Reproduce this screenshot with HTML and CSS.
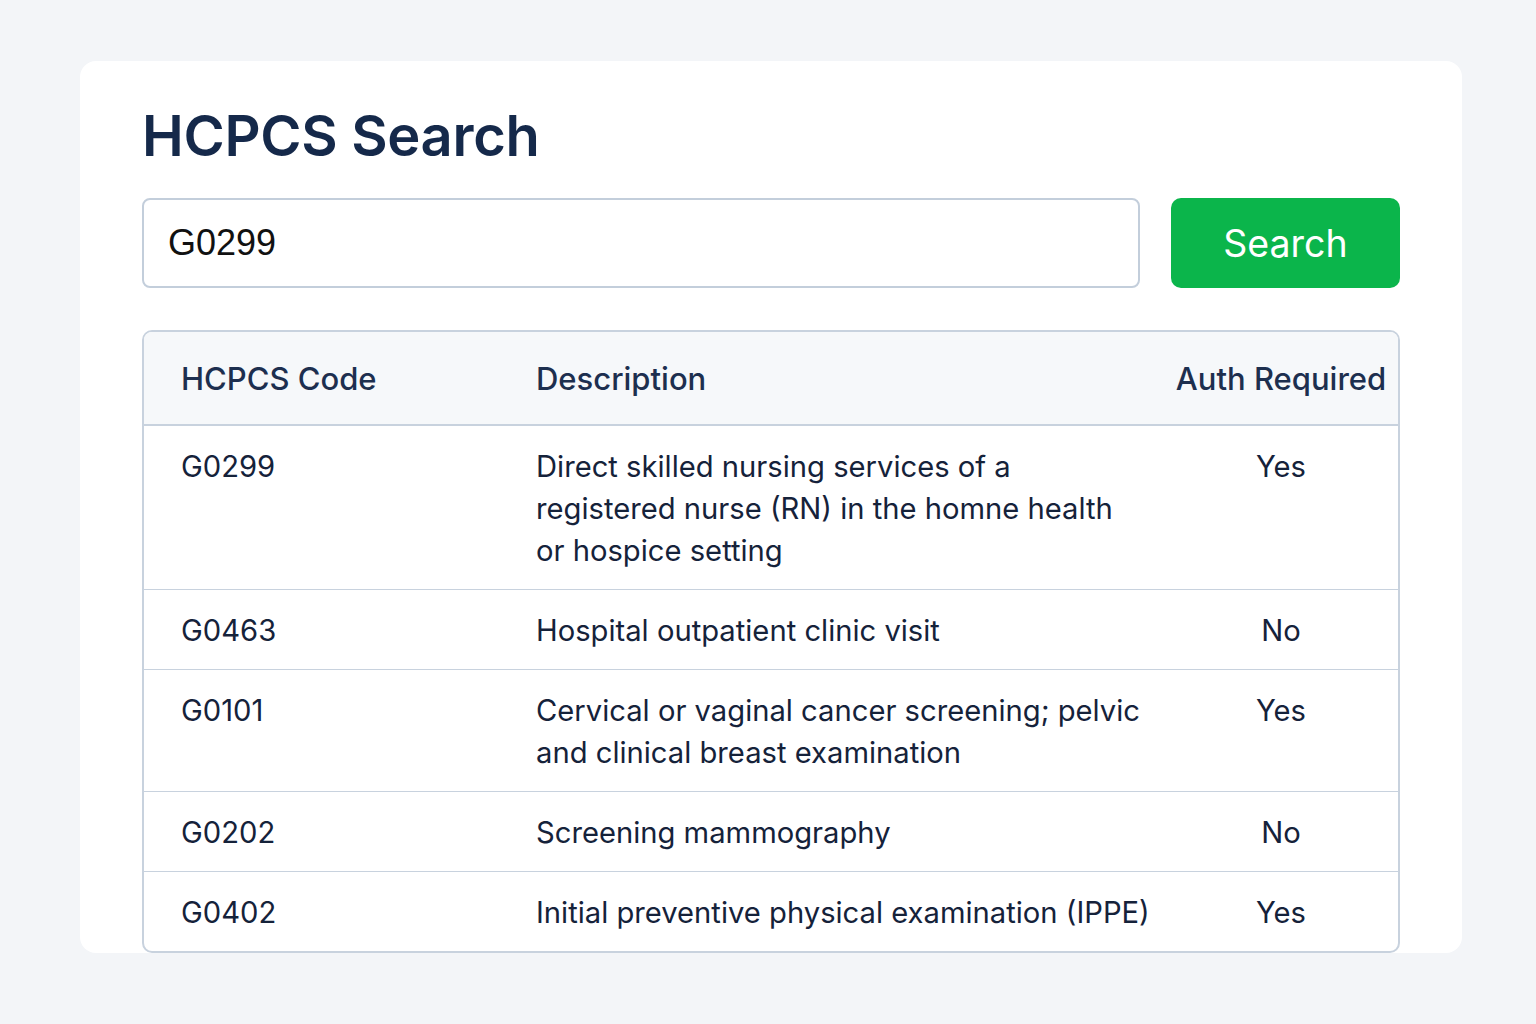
FILE: index.html
```html
<!DOCTYPE html>
<html lang="en">
<head>
  <meta charset="UTF-8">
  <meta name="viewport" content="width=device-width, initial-scale=1.0">
  <title>HCPCS Search</title>
  <link rel="stylesheet" href="styles.css">
</head>
<body>
  <div class="card">
    <h1>HCPCS Search</h1>

    <div class="search-row">
      <input class="search-input" type="text" id="code" value="G0299">
      <button class="search-btn" id="search-btn">Search</button>
    </div>

    <div class="table-wrap">
      <table class="results">
        <thead>
          <tr>
            <th class="col-code">HCPCS Code</th>
            <th class="col-desc">Description</th>
            <th class="col-auth">Auth Required</th>
          </tr>
        </thead>
        <tbody>
          <tr>
            <td>G0299</td>
            <td>Direct skilled nursing services of a<br>registered nurse (RN) in the homne health<br>or hospice setting</td>
            <td class="auth">Yes</td>
          </tr>
          <tr>
            <td>G0463</td>
            <td>Hospital outpatient clinic visit</td>
            <td class="auth">No</td>
          </tr>
          <tr>
            <td>G0101</td>
            <td>Cervical or vaginal cancer screening; pelvic<br>and clinical breast examination</td>
            <td class="auth">Yes</td>
          </tr>
          <tr>
            <td>G0202</td>
            <td>Screening mammography</td>
            <td class="auth">No</td>
          </tr>
          <tr>
            <td>G0402</td>
            <td>Initial preventive physical examination (IPPE)</td>
            <td class="auth">Yes</td>
          </tr>
        </tbody>
      </table>
    </div>
  </div>
</body>
</html>
```

FILE: styles.css
```css
body {
  font-family: 'Inter', 'Noto Sans', sans-serif;
  margin: 0;
  padding: 0;
  background-color: #f3f5f8;
  color: #17243b;
}

.card {
  width: 1258px;
  margin: 61px 0 0 80px;
  padding: 42px 62px 0;
  background-color: #fff;
  border-radius: 16px;
}

h1 {
  font-size: 56px;
  font-weight: 600;
  color: #15294a;
  margin: 0 0 28px;
  line-height: 1.2;
  letter-spacing: -0.3px;
}

.search-row {
  display: flex;
  gap: 31px;
}

.search-input {
  flex: 1;
  height: 90px;
  box-sizing: border-box;
  padding: 0 24px;
  font-family: 'Liberation Sans', Arial, sans-serif;
  font-size: 36px;
  color: #111;
  border: 2px solid #c3cedb;
  border-radius: 8px;
  outline: none;
}

.search-btn {
  width: 229px;
  height: 90px;
  font-family: 'Inter', sans-serif;
  font-size: 37.5px;
  color: #fff;
  background-color: #0bb54b;
  border: none;
  border-radius: 10px;
  cursor: pointer;
}

.search-btn:hover {
  background-color: #09a443;
}

.table-wrap {
  margin-top: 42px;
  border: 2px solid #c8d2de;
  border-radius: 10px;
  overflow: hidden;
}

.results {
  width: 100%;
  border-collapse: collapse;
}

.results th {
  background-color: #f6f8fa;
  font-size: 31px;
  font-weight: 500;
  color: #1d2f4f;
  text-align: left;
  line-height: 42px;
  padding: 26px 0 24px 37px;
  border-bottom: 2px solid #c8d2de;
  white-space: nowrap;
}

.results th.col-code {
  width: 318px;
}

.results th.col-auth {
  text-align: center;
  padding: 26px 0 24px;
  width: 234px;
}

.results td {
  font-size: 29.2px;
  color: #15223a;
  line-height: 42px;
  padding: 20px 0 17px 37px;
  vertical-align: top;
  border-bottom: 1.5px solid #c8d2de;
}

.results td.auth {
  text-align: center;
  padding-left: 0;
}

.results tr:last-child td {
  border-bottom: none;
}
```
